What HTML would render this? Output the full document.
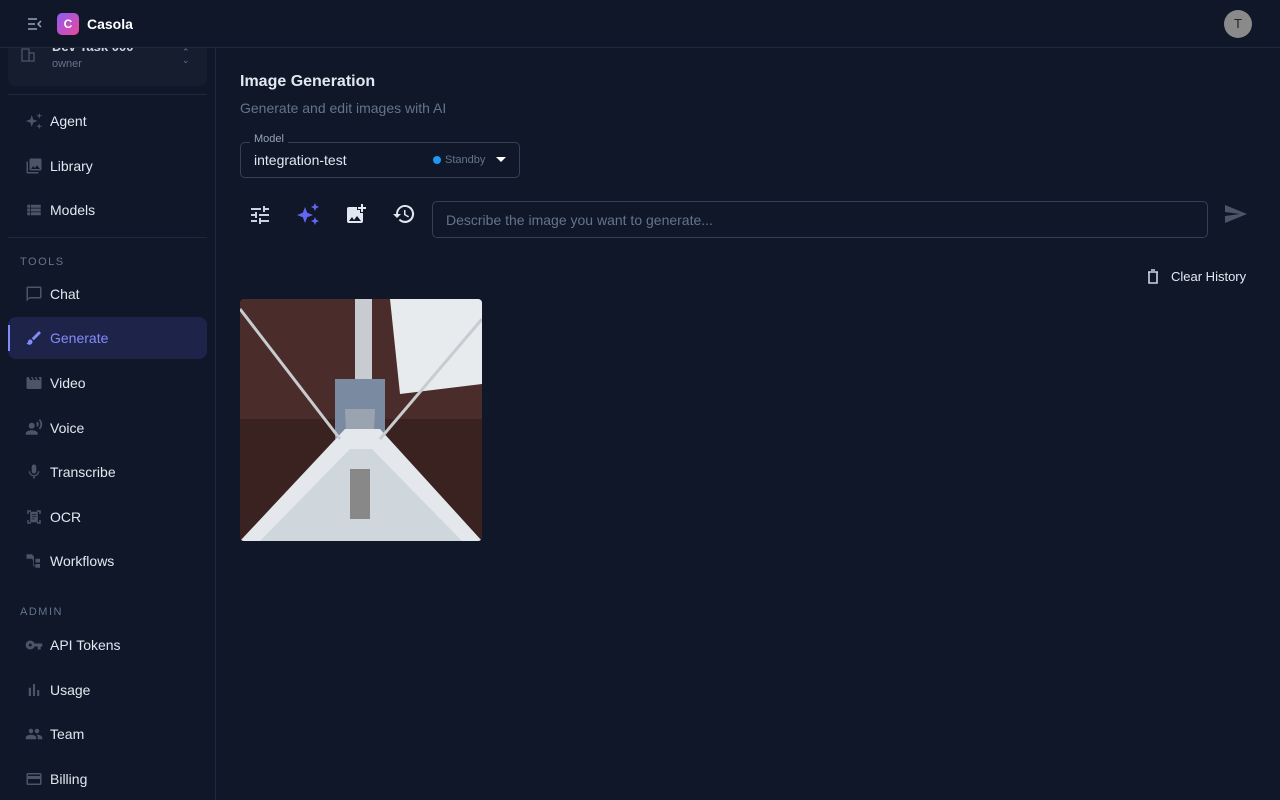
<!DOCTYPE html>
<html><head><meta charset="utf-8"><style>
*{box-sizing:border-box;margin:0;padding:0}
body{width:1280px;height:800px;background:#0f1729;font-family:"Liberation Sans",sans-serif;color:#e2e8f0;position:relative;overflow:hidden}
.top{position:absolute;left:0;top:0;width:1280px;height:48px;border-bottom:1px solid #1e293b;background:#0f1729;z-index:2}
.side{position:absolute;left:0;top:48px;width:216px;height:752px;border-right:1px solid #1e293b;overflow:hidden}
.item{position:absolute;left:8px;width:199px;height:40px;border-radius:8px;display:flex;align-items:center;font-size:14px;color:#e2e8f0}
.item svg{position:absolute;left:17px;top:11px;width:18px;height:18px;fill:#4b5567}
.item span{position:absolute;left:42px}
.sec{position:absolute;left:20px;font-size:11px;letter-spacing:1.5px;color:#64748b}
.ic{position:absolute;width:24px;height:24px}
</style></head><body>
<div class="top">
 <svg style="position:absolute;left:27px;top:17px" width="16" height="14" viewBox="0 0 16 14"><path d="M1 2h9M1 7h7M1 12h9M14 4l-3 3 3 3" stroke="#94a3b8" stroke-width="1.5" fill="none"/></svg>
 <div style="position:absolute;left:57px;top:13px;width:22px;height:22px;border-radius:5px;background:linear-gradient(135deg,#8b5cf6,#ec4899);color:#fff;font-size:12px;font-weight:bold;text-align:center;line-height:22px">C</div>
 <div style="position:absolute;left:87px;top:16px;font-size:14px;font-weight:bold;color:#fff">Casola</div>
 <div style="position:absolute;left:1224px;top:10px;width:28px;height:28px;border-radius:50%;background:#8a8a8a;color:#222;font-size:13px;text-align:center;line-height:28px">T</div>
</div>
<div class="side">
 <div style="position:absolute;left:8px;top:-6px;width:199px;height:44px;background:#151d2e;border-radius:8px"></div>
 <svg style="position:absolute;left:21px;top:0px" width="14" height="14" viewBox="0 0 14 14"><path d="M1 1h7v12H1zM8 5h5v8H8z" fill="none" stroke="#4b5567" stroke-width="1.3"/></svg>
 <div style="position:absolute;left:52px;top:-9px;font-size:13px;color:#cbd5e1;font-weight:bold">Dev Task 000</div>
 <div style="position:absolute;left:52px;top:10px;font-size:11px;color:#64748b">owner</div>
 <div style="position:absolute;left:182px;top:0px;font-size:9px;color:#64748b;line-height:8px">⌃<br>⌄</div>
 <div style="position:absolute;left:8px;top:46px;width:199px;height:1px;background:#1e293b"></div>
 <div class="item" style="top:53px"><svg viewBox="0 0 24 24"><path d="M9 4l2 6 6 2-6 2-2 6-2-6-6-2 6-2zM19 1l1 3 3 1-3 1-1 3-1-3-3-1 3-1zM19 15l1 3 3 1-3 1-1 3-1-3-3-1 3-1z"/></svg><span>Agent</span></div>
 <div class="item" style="top:98px"><svg viewBox="0 0 24 24"><path d="M22 16V4a2 2 0 0 0-2-2H8a2 2 0 0 0-2 2v12a2 2 0 0 0 2 2h12a2 2 0 0 0 2-2zm-11-4l2 3 3-4 4 5H8zM2 6v14a2 2 0 0 0 2 2h14v-2H4V6z"/></svg><span>Library</span></div>
 <div class="item" style="top:142px"><svg viewBox="0 0 24 24"><path d="M3 14h4v-4H3zm0 5h4v-4H3zm0-10h4V5H3zm5 5h13v-4H8zm0 5h13v-4H8zM8 5v4h13V5z"/></svg><span>Models</span></div>
 <div style="position:absolute;left:8px;top:189px;width:199px;height:1px;background:#1e293b"></div>
 <div class="sec" style="top:208px">TOOLS</div>
 <div class="item" style="top:226px"><svg viewBox="0 0 24 24"><path d="M20 2H4a2 2 0 0 0-2 2v18l4-4h14a2 2 0 0 0 2-2V4a2 2 0 0 0-2-2zm0 14H6l-2 2V4h16z"/></svg><span>Chat</span></div>
 <div class="item" style="top:269px;background:#1e2449;height:42px"><div style="position:absolute;left:0;top:8px;width:2px;height:26px;background:#818cf8"></div><svg viewBox="0 0 24 24" style="fill:#818cf8;top:12px"><path d="M7 14c-1.7 0-3 1.3-3 3 0 1.3-1.2 2-2 2 .9 1.2 2.5 2 4 2 2.2 0 4-1.8 4-4 0-1.700-1.3-3-3-3zm13.7-9.4l-1.3-1.3a1 1 0 0 0-1.4 0L9 12.3 11.7 15l9-9a1 1 0 0 0 0-1.4z"/></svg><span style="color:#818cf8">Generate</span></div>
 <div class="item" style="top:315px"><svg viewBox="0 0 24 24"><path d="M18 4l2 4h-3l-2-4h-2l2 4h-3l-2-4H8l2 4H7L5 4H4a2 2 0 0 0-2 2v12a2 2 0 0 0 2 2h16a2 2 0 0 0 2-2V4z"/></svg><span>Video</span></div>
 <div class="item" style="top:360px"><svg viewBox="0 0 24 24"><circle cx="9" cy="9" r="4"/><path d="M9 15c-2.7 0-8 1.300-8 4v2h16v-2c0-2.7-5.3-4-8-4zm7.8-11.6l-1.7 1.7c.8 1.2.8 2.6 0 3.8l1.7 1.7c2-2 2-5 0-7.2zM20 0l-1.6 1.6c2.8 3 2.8 7.6 0 10.8L20 14c3.9-3.9 3.9-10 0-14z"/></svg><span>Voice</span></div>
 <div class="item" style="top:404px"><svg viewBox="0 0 24 24"><path d="M12 14a3 3 0 0 0 3-3V5a3 3 0 0 0-6 0v6a3 3 0 0 0 3 3zm5.3-3c0 3-2.5 5.1-5.3 5.1S6.7 14 6.7 11H5c0 3.4 2.7 6.2 6 6.7V21h2v-3.3c3.3-.5 6-3.3 6-6.7z"/></svg><span>Transcribe</span></div>
 <div class="item" style="top:449px"><svg viewBox="0 0 24 24"><path d="M3 3h5v2H5v3H3zm13 0h5v5h-2V5h-3zM3 16h2v3h3v2H3zm16 3v-3h2v5h-5v-2zM7 5h10v14H7zm2 3v1h6V8zm0 3v1h6v-1zm0 3v1h4v-1z"/></svg><span>OCR</span></div>
 <div class="item" style="top:493px"><svg viewBox="0 0 24 24"><path d="M2 3h8v6H2zm12 6h6v5h-6zM14 16h6v5h-6zM10 5h2v13h2v1h-3V11h-1z"/></svg><span>Workflows</span></div>
 <div class="sec" style="top:558px">ADMIN</div>
 <div class="item" style="top:577px"><svg viewBox="0 0 24 24"><path d="M12.6 10A6 6 0 1 0 12.6 14H17v4h4v-4h2v-4zM7 14a2 2 0 1 1 0-4 2 2 0 0 1 0 4z"/></svg><span>API Tokens</span></div>
 <div class="item" style="top:622px"><svg viewBox="0 0 24 24"><path d="M5 9h3v11H5zm5.6-5h2.8v16h-2.8zm5.6 8H19v8h-2.8z"/></svg><span>Usage</span></div>
 <div class="item" style="top:666px"><svg viewBox="0 0 24 24"><path d="M16 11a3 3 0 1 0 0-6 3 3 0 0 0 0 6zm-8 0a3 3 0 1 0 0-6 3 3 0 0 0 0 6zm0 2c-2.3 0-7 1.2-7 3.5V19h14v-2.5C15 14.2 10.3 13 8 13zm8 0h-1c1.2.8 2 2 2 3.5V19h6v-2.5c0-2.3-4.7-3.5-7-3.5z"/></svg><span>Team</span></div>
 <div class="item" style="top:711px"><svg viewBox="0 0 24 24"><path d="M20 4H4a2 2 0 0 0-2 2v12a2 2 0 0 0 2 2h16a2 2 0 0 0 2-2V6a2 2 0 0 0-2-2zm0 14H4v-6h16zm0-10H4V6h16z"/></svg><span>Billing</span></div>
</div>
<div style="position:absolute;left:240px;top:73px;font-size:16px;font-weight:bold;color:#e2e8f0">Image Generation</div>
<div style="position:absolute;left:240px;top:100px;font-size:14px;color:#64748b">Generate and edit images with AI</div>
<div style="position:absolute;left:240px;top:142px;width:280px;height:36px;border:1px solid #334155;border-radius:5px"></div>
<div style="position:absolute;left:250px;top:133px;padding:0 4px;background:#0f1729;font-size:11px;color:#94a3b8">Model</div>
<div style="position:absolute;left:254px;top:152px;font-size:14px;color:#e2e8f0">integration-test</div>
<div style="position:absolute;left:433px;top:156px;width:8px;height:8px;border-radius:50%;background:#2196f3"></div>
<div style="position:absolute;left:445px;top:154px;font-size:11px;color:#64748b">Standby</div>
<svg style="position:absolute;left:496px;top:157px" width="10" height="6"><path d="M0 0h10L5 5z" fill="#fff"/></svg>
<svg class="ic" style="left:248px;top:203px" viewBox="0 0 24 24" fill="#cbd5e1"><path d="M3 17v2h6v-2zM3 5v2h10V5zm10 16v-2h8v-2h-8v-2h-2v6zM7 9v2H3v2h4v2h2V9zm14 4v-2H11v2zm-6-4h2V7h4V5h-4V3h-2z"/></svg>
<svg class="ic" style="left:296px;top:202px" viewBox="0 0 24 24" fill="#6366f1"><path d="M9 5l2.2 5.8L17 13l-5.8 2.2L9 21l-2.2-5.8L1 13l5.8-2.2zM19 1l1.2 2.8L23 5l-2.8 1.2L19 9l-1.2-2.8L15 5l2.8-1.2zM19 15l1.2 2.8L23 19l-2.8 1.2L19 23l-1.2-2.8L15 19l2.8-1.2z"/></svg>
<svg class="ic" style="left:344px;top:202px" viewBox="0 0 24 24" fill="#e2e8f0"><path d="M19 7v2.99s-1.99.01-2 0V7h-3s.01-1.99 0-2h3V2h2v3h3v2zm-3 4V8h-3V5H5a2 2 0 0 0-2 2v12a2 2 0 0 0 2 2h12a2 2 0 0 0 2-2v-8zM5 19l3-4 2 3 3-4 4 5z"/></svg>
<svg class="ic" style="left:392px;top:202px" viewBox="0 0 24 24" fill="#e2e8f0"><path d="M13 3a9 9 0 0 0-9 9H1l3.9 3.9.1.1L9 12H6a7 7 0 1 1 2.1 4.9l-1.4 1.4A9 9 0 1 0 13 3zm-1 5v5l4.3 2.5.7-1.2-3.5-2.1V8z"/></svg>
<div style="position:absolute;left:432px;top:201px;width:776px;height:37px;border:1px solid #334155;border-radius:5px"></div>
<div style="position:absolute;left:446px;top:212px;font-size:14px;color:#64748b">Describe the image you want to generate...</div>
<svg style="position:absolute;left:1225px;top:205px" width="22" height="18" viewBox="0 0 22 18"><path d="M0 0l22 9L0 18V11l15-2L0 7z" fill="#4b5567"/></svg>
<svg style="position:absolute;left:1147px;top:269px" width="12" height="15" viewBox="0 0 12 15"><path d="M1 3h10M4 1h4M2 3v11h8V3" stroke="#cbd5e1" stroke-width="1.6" fill="none"/></svg>
<div style="position:absolute;left:1171px;top:269px;font-size:13px;color:#e2e8f0">Clear History</div>
<svg style="position:absolute;left:240px;top:299px;border-radius:4px" width="242" height="242" viewBox="0 0 242 242">
 <rect width="242" height="242" fill="#3a2220"/>
 <rect width="242" height="120" fill="#4a2c2a"/>
 <path d="M150 0h92v85L160 95z" fill="#e8ebee"/>
 <path d="M115 0h17v90h-17z" fill="#c8ccd0"/>
 <path d="M95 80h50v60H95z" fill="#7a8aa0"/>
 <path d="M105 110h30l-5 110h-20z" fill="#9aa4b0"/>
 <path d="M0 242L105 130h35l102 112z" fill="#e4e8ec"/>
 <path d="M20 242L110 150h22l90 92z" fill="#cfd6dc"/>
 <path d="M0 10L100 140M242 20L140 140" stroke="#c8ccd0" stroke-width="3"/>
 <path d="M110 170h20v50h-20z" fill="#888"/>
</svg>
</body></html>
